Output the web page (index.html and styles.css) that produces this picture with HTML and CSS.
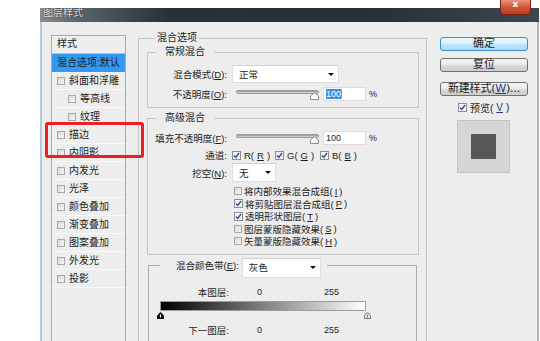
FILE: index.html
```html
<!DOCTYPE html>
<html lang="zh-CN">
<head>
    <meta charset="UTF-8">
    <title>图层样式</title>
    <link rel="stylesheet" href="styles.css">
</head>
<body>
<div class="dialog">
    <div class="titlebar"><span class="title">图层样式</span></div>
    <div class="close">x</div>

    <div class="content">
        <div class="styles-list">
            <div class="list-head">样式</div>
            <div class="item selected">混合选项:默认</div>
            <div class="item"><span class="cb"></span>斜面和浮雕</div>
            <div class="item sub"><span class="cb"></span>等高线</div>
            <div class="item sub"><span class="cb"></span>纹理</div>
            <div class="item"><span class="cb"></span>描边</div>
            <div class="item"><span class="cb"></span>内阴影</div>
            <div class="item"><span class="cb"></span>内发光</div>
            <div class="item"><span class="cb"></span>光泽</div>
            <div class="item"><span class="cb"></span>颜色叠加</div>
            <div class="item"><span class="cb"></span>渐变叠加</div>
            <div class="item"><span class="cb"></span>图案叠加</div>
            <div class="item"><span class="cb"></span>外发光</div>
            <div class="item"><span class="cb"></span>投影</div>
        </div>

        <fieldset class="options">
            <legend>混合选项</legend>

            <fieldset class="group general">
                <legend>常规混合</legend>
                <div class="row tall">
                    <span class="lbl">混合模式(<u>D</u>):</span>
                    <div class="select mode"><span>正常</span><span class="arrow"></span></div>
                </div>
                <div class="row slider-row">
                    <span class="lbl">不透明度(<u>O</u>):</span>
                    <div class="slider">
                        <div class="track"></div>
                        <svg class="thumb" width="9" height="8" viewBox="0 0 9 8"><path d="M4.5 0.5 L8.5 4 V7.5 H0.5 V4 Z" fill="#fafafa" stroke="#8c8c8c"/></svg>
                    </div>
                    <div class="num"><span class="picked">100</span></div>
                    <span class="pct">%</span>
                </div>
            </fieldset>

            <fieldset class="group advanced">
                <legend>高级混合</legend>
                <div class="row slider-row">
                    <span class="lbl">填充不透明度(<u>F</u>):</span>
                    <div class="slider">
                        <div class="track"></div>
                        <svg class="thumb" width="9" height="8" viewBox="0 0 9 8"><path d="M4.5 0.5 L8.5 4 V7.5 H0.5 V4 Z" fill="#fafafa" stroke="#8c8c8c"/></svg>
                    </div>
                    <div class="num">100</div>
                    <span class="pct">%</span>
                </div>
                <div class="row channels">
                    <span class="lbl">通道:</span>
                    <span class="chan r"><span class="cb on"><svg width="7" height="7" viewBox="0 0 7 7"><path d="M1 3.5 L2.8 5.5 L6 1" stroke="#2c4f9e" stroke-width="1.4" fill="none"/></svg></span>R(<u>R</u>)</span>
                    <span class="chan g"><span class="cb on"><svg width="7" height="7" viewBox="0 0 7 7"><path d="M1 3.5 L2.8 5.5 L6 1" stroke="#2c4f9e" stroke-width="1.4" fill="none"/></svg></span>G(<u>G</u>)</span>
                    <span class="chan"><span class="cb on"><svg width="7" height="7" viewBox="0 0 7 7"><path d="M1 3.5 L2.8 5.5 L6 1" stroke="#2c4f9e" stroke-width="1.4" fill="none"/></svg></span>B(<u>B</u>)</span>
                </div>
                <div class="row knock">
                    <span class="lbl">挖空(<u>N</u>):</span>
                    <div class="select small"><span>无</span><span class="arrow"></span></div>
                </div>
                <div class="checks">
                    <div class="check"><span class="cb"></span>将内部效果混合成组(<u>I</u>)</div>
                    <div class="check"><span class="cb on"><svg width="7" height="7" viewBox="0 0 7 7"><path d="M1 3.5 L2.8 5.5 L6 1" stroke="#2c4f9e" stroke-width="1.4" fill="none"/></svg></span>将剪贴图层混合成组(<u>P</u>)</div>
                    <div class="check"><span class="cb on"><svg width="7" height="7" viewBox="0 0 7 7"><path d="M1 3.5 L2.8 5.5 L6 1" stroke="#2c4f9e" stroke-width="1.4" fill="none"/></svg></span>透明形状图层(<u>T</u>)</div>
                    <div class="check"><span class="cb"></span>图层蒙版隐藏效果(<u>S</u>)</div>
                    <div class="check"><span class="cb"></span>矢量蒙版隐藏效果(<u>H</u>)</div>
                </div>
            </fieldset>

            <fieldset class="group blendif">
                <legend><span class="lbl-inline">混合颜色带(<u>E</u>):</span><span class="select gray"><span>灰色</span><span class="arrow"></span></span></legend>
                <div class="values">
                    <span class="vlbl">本图层:</span>
                    <span class="v0">0</span>
                    <span>255</span>
                </div>
                <div class="ramp"></div>
                <div class="stops">
                    <svg width="7" height="7" viewBox="0 0 7 7"><path d="M3.5 0 L7 3.5 V7 H0 V3.5 Z" fill="#111"/><path d="M3.5 2.5 V5.5" stroke="#fff"/></svg>
                    <svg width="7" height="7" viewBox="0 0 7 7"><path d="M3.5 0.5 L6.5 3.5 V6.5 H0.5 V3.5 Z" fill="#e2e2e2" stroke="#7a7a7a"/><path d="M3.5 2.5 V5.5" stroke="#7a7a7a"/></svg>
                </div>
                <div class="values next">
                    <span class="vlbl">下一图层:</span>
                    <span class="v0">0</span>
                    <span>255</span>
                </div>
            </fieldset>
        </fieldset>

        <div class="actions">
            <div class="btn primary">确定</div>
            <div class="btn reset">复位</div>
            <div class="btn new">新建样式(<u>W</u>)...</div>
            <div class="preview-check"><span class="cb on"><svg width="7" height="7" viewBox="0 0 7 7"><path d="M1 3.5 L2.8 5.5 L6 1" stroke="#2c4f9e" stroke-width="1.4" fill="none"/></svg></span>预览(<u>V</u>)</div>
            <div class="preview"><div class="swatch"></div></div>
        </div>
    </div>

    <div class="mark"></div>
</div>
</body>
</html>
```

FILE: styles.css
```css
* {
    box-sizing: border-box;
}
body {
    margin: 0;
    height: 341px;
    overflow: hidden;
    background: #fff;
    font-family: "Liberation Sans", "Noto Sans CJK SC", sans-serif;
    font-size: 10px;
    color: #1c1c1c;
}
u {
    text-decoration: underline;
}

/* window frame */
.dialog {
    position: relative;
    margin: 8px 0 0 40px;
    width: 499px;
    height: 340px;
}
.titlebar {
    height: 14px;
    overflow: hidden;
    padding-left: 3px;
    background: linear-gradient(90deg, #858e94 0, #59636a 40px, #283037 130px, #263038 330px, #3c474f 100%);
}
.title {
    display: block;
    margin-top: -2px;
    line-height: 14px;
    font-size: 10px;
    color: #dedede;
    text-shadow: 0 0 2px #222;
}
.close {
    position: absolute;
    top: -8px;
    right: 8px;
    width: 31px;
    height: 15px;
    border: 1px solid #7a2414;
    border-top: none;
    border-radius: 0 0 4px 4px;
    background: linear-gradient(#e9917a, #cf5235 55%, #b53c22);
    color: #fff;
    font: bold 9px/9px "DejaVu Sans", sans-serif;
    text-align: center;
}
.content {
    display: flex;
    align-items: flex-start;
    height: 326px;
    overflow: hidden;
    padding: 10px 0 0 9px;
    background: #ecedec;
    border-left: 2px solid #b3cbe0;
    border-right: 2px solid #a6b6c3;
}

/* styles list */
.styles-list {
    flex: none;
    width: 75px;
    height: 320px;
    margin-top: 3px;
    border: 1px solid #a9a9a9;
    border-bottom: none;
    background: #eeeeee;
}
.list-head {
    height: 18px;
    line-height: 15px;
    padding-left: 5px;
    border-bottom: 1px solid #c4c4c4;
}
.item {
    display: flex;
    align-items: center;
    gap: 4px;
    height: 18px;
    padding-left: 5px;
    border-bottom: 1px solid #f9f9f9;
    line-height: 12px;
}
.item.sub {
    padding-left: 16px;
}
.item.selected {
    background: #3399f3;
    border-bottom-color: #3399f3;
}

.cb {
    flex: none;
    display: inline-flex;
    align-items: center;
    justify-content: center;
    width: 8px;
    height: 8px;
    border: 1px solid #a8a8a8;
    background: linear-gradient(135deg, #d9d9d9, #f6f6f6);
}
.cb.on {
    width: 9px;
    height: 9px;
    border-color: #8e8e8e;
    background: #f3f3f3;
}

/* blending options */
fieldset {
    margin: 0;
    min-width: 0;
}
legend {
    line-height: 12px;
    font-size: 10px;
}
.options {
    flex: none;
    width: 289px;
    height: 330px;
    margin-left: 12px;
    padding: 2px 7px 0 8px;
    border: 1px solid #c3c3c3;
    border-bottom: none;
}
.options > legend {
    margin-left: 8px;
    padding: 0 2px;
}
.group {
    padding: 7px 0 5px;
    border: 1px solid #c6c6c6;
}
.group > legend {
    margin-left: 8px;
    padding: 0 9px;
}
.advanced {
    margin-top: 4px;
    padding: 6px 0 6px;
}

.row {
    display: flex;
    align-items: center;
    height: 16px;
    font-size: 9.5px;
}
.row.tall {
    height: 18px;
}
.slider-row + .slider-row,
.tall + .slider-row {
    margin-top: 3px;
}
.lbl {
    width: 79px;
    margin-right: 5px;
    text-align: right;
    white-space: nowrap;
}

.select {
    display: inline-flex;
    align-items: center;
    justify-content: space-between;
    height: 18px;
    padding: 0 4px 0 6px;
    background: #fff;
    border: 1px solid #dedede;
    border-top-color: #d0d0d0;
    font-size: 9.5px;
}
.select.mode {
    width: 107px;
}
.select.small {
    width: 44px;
    height: 19px;
}
.arrow {
    width: 0;
    height: 0;
    border-left: 3px solid transparent;
    border-right: 3px solid transparent;
    border-top: 3px solid #111;
}

.slider {
    position: relative;
    width: 83px;
    height: 16px;
    margin-left: 4px;
}
.track {
    margin-top: 4px;
    height: 4px;
    border-radius: 2px;
    border: 1px solid #9a9a9a;
    background: linear-gradient(#8f8f8f, #e2e2e2);
}
.thumb {
    position: absolute;
    right: 0;
    top: 6px;
}
.num {
    width: 43px;
    height: 14px;
    margin-left: 4px;
    padding-left: 2px;
    background: #fff;
    border: 1px solid #dcdcdc;
    font-size: 9px;
    line-height: 12px;
}
.picked {
    background: #3d8ee6;
    color: #fff;
    border-right: 1px solid #e08a2a;
}
.pct {
    margin-left: 3px;
    font-size: 9px;
}

.channels {
    height: 14px;
    margin-top: 2px;
}
.chan {
    display: inline-flex;
    align-items: center;
    gap: 3px;
}
.chan.r {
    width: 43px;
}
.chan.g {
    width: 45px;
}
.knock {
    height: 19px;
    margin-top: 1px;
}
.checks {
    margin: 3px 0 0 86px;
    font-size: 9.5px;
}
.check {
    display: flex;
    align-items: center;
    gap: 2px;
    height: 12.5px;
}

.blendif {
    height: 100px;
    margin: 3px 2px 0 1px;
    padding: 12px 0 0;
    border-color: #ababab;
    border-bottom: none;
}
.blendif > legend {
    margin-left: 11px;
    padding: 0 6px 0 16px;
    line-height: 16px;
    font-size: 9.5px;
}
.lbl-inline {
    vertical-align: top;
}
.select.gray {
    vertical-align: top;
    width: 79px;
    height: 20px;
    margin: 0 0 -4px 3px;
}
.values {
    display: flex;
    align-items: center;
    height: 12px;
    font-size: 9px;
}
.vlbl {
    width: 80px;
    text-align: right;
    font-size: 9.5px;
}
.v0 {
    width: 67px;
    margin-left: 28px;
}
.ramp {
    width: 206px;
    height: 10px;
    margin: 3px 0 0 11px;
    border: 1px solid #9c9c9c;
    background: linear-gradient(90deg, #000, #fff);
}
.stops {
    display: flex;
    justify-content: space-between;
    width: 214px;
    height: 7px;
    margin: 1px 0 0 8px;
}
.values.next {
    margin-top: 5px;
}

/* buttons and preview */
.actions {
    flex: none;
    display: flex;
    flex-direction: column;
    width: 88px;
    margin: 5px 0 0 13px;
}
.btn {
    height: 14px;
    border: 1px solid #707070;
    border-radius: 3px;
    background: linear-gradient(#f4f4f4, #e8e8e8 50%, #d8d8d8 51%, #cdcdcd);
    font-family: "DejaVu Sans", "Noto Sans CJK SC", sans-serif;
    font-size: 11px;
    line-height: 12px;
    text-align: center;
    white-space: nowrap;
}
.btn.primary {
    border-color: #3c8fcc;
    background: linear-gradient(#eaf6fd, #d9f0fc 50%, #bee6fd 51%, #a7d9f5);
}
.btn.reset {
    margin-top: 7px;
}
.btn.new {
    margin-top: 10px;
    letter-spacing: -0.2px;
}
.btn u,
.preview-check u {
    color: #22358a;
}
.preview-check {
    display: flex;
    align-items: center;
    gap: 3px;
    height: 12px;
    margin: 5px 0 0 18px;
    font-size: 10px;
}
.preview {
    display: flex;
    align-items: center;
    justify-content: center;
    width: 53px;
    height: 53px;
    margin: 7px 0 0 17px;
    background: #d6d6d6;
    border: 1px solid #c4c4c4;
}
.swatch {
    width: 25px;
    height: 25px;
    background: #575757;
}

/* annotation */
.mark {
    position: absolute;
    left: 5px;
    top: 114px;
    width: 99px;
    height: 36px;
    border: 3px solid #ec1f24;
    border-radius: 3px;
}
```
